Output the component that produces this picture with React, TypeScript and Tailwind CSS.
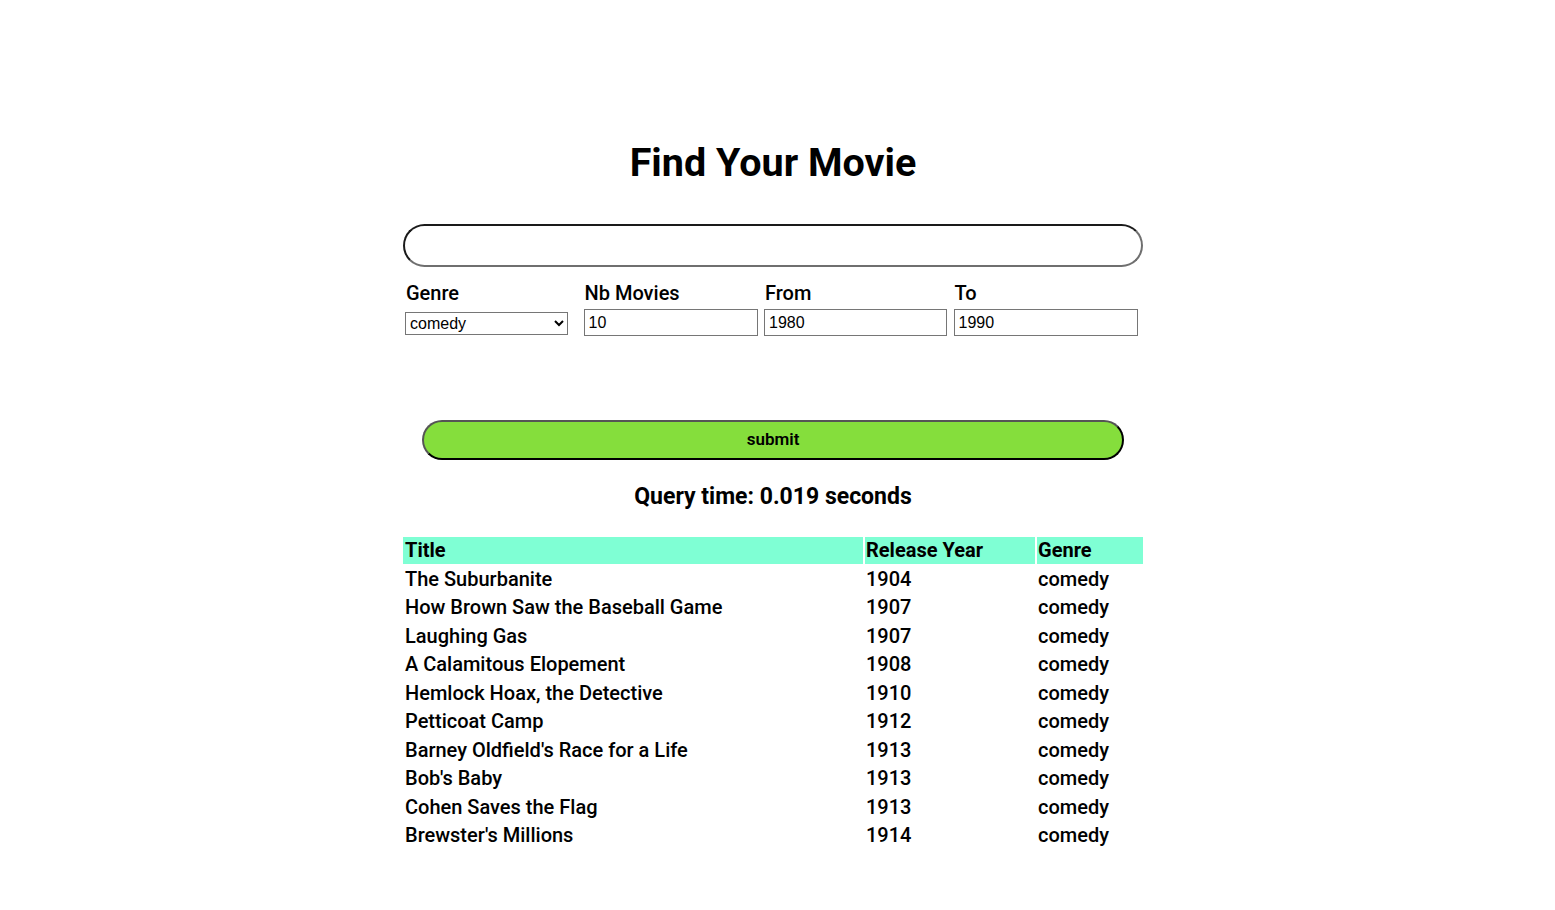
import { useState } from "react"

const movies = [
  { title: "The Suburbanite", year: 1904 },
  { title: "How Brown Saw the Baseball Game", year: 1907 },
  { title: "Laughing Gas", year: 1907 },
  { title: "A Calamitous Elopement", year: 1908 },
  { title: "Hemlock Hoax, the Detective", year: 1910 },
  { title: "Petticoat Camp", year: 1912 },
  { title: "Barney Oldfield's Race for a Life", year: 1913 },
  { title: "Bob's Baby", year: 1913 },
  { title: "Cohen Saves the Flag", year: 1913 },
  { title: "Brewster's Millions", year: 1914 },
]

export default function App() {
  const [query, setQuery] = useState("")
  const [genre, setGenre] = useState("comedy")
  const [nb, setNb] = useState("10")
  const [from, setFrom] = useState("1980")
  const [to, setTo] = useState("1990")

  const inputCls =
    "h-[27px] border border-[#767676] px-[4px] text-[16px] text-black font-['Liberation_Sans',Arial,sans-serif] outline-none"

  return (
    <div className="min-h-[910px] bg-white text-black font-['Roboto',sans-serif]">
      <div className="ml-[403px] w-[740px] pt-[138px]">
        <h1 className="text-center text-[39.5px] font-bold leading-[50px]">Find Your Movie</h1>

        <input
          value={query}
          onChange={(e) => setQuery(e.target.value)}
          className="mt-[36px] block h-[43px] w-full rounded-full border-2 [border-style:inset] border-[#6f6f6f] px-4 outline-none"
        />

        <div className="mt-[14px] flex pl-[1px] text-[20px] font-medium">
          <div className="w-[180px] pl-[1px]">
            <label className="block pl-[1px] leading-[24px]">Genre</label>
            <select
              value={genre}
              onChange={(e) => setGenre(e.target.value)}
              className="mt-[7px] h-[23px] w-[163px] border border-[#767676] bg-white text-[16px] font-['Liberation_Sans',Arial,sans-serif]"
            >
              <option>comedy</option>
              <option>drama</option>
              <option>action</option>
            </select>
          </div>
          <div className="w-[181px]">
            <label className="block pl-[1px] leading-[24px]">Nb Movies</label>
            <input value={nb} onChange={(e) => setNb(e.target.value)} className={inputCls + " mt-[4px] w-[174px]"} />
          </div>
          <div className="w-[190px]">
            <label className="block pl-[1px] leading-[24px]">From</label>
            <input value={from} onChange={(e) => setFrom(e.target.value)} className={inputCls + " mt-[4px] w-[183px]"} />
          </div>
          <div className="w-[190px]">
            <label className="block pl-[1px] leading-[24px]">To</label>
            <input value={to} onChange={(e) => setTo(e.target.value)} className={inputCls + " mt-[4px] w-[184px]"} />
          </div>
        </div>

        <button className="mx-auto mt-[83px] block h-[40px] w-[702px] rounded-full border-2 [border-style:outset] border-[#555] bg-[#85de3c] text-[17px] font-semibold">
          submit
        </button>

        <p className="mt-[22px] text-center text-[23px] font-bold leading-[30px]">Query time: 0.019 seconds</p>

        <table className="-mx-[2px] mt-[23px] w-[744px] border-separate border-spacing-[2px] text-[20px] font-medium leading-[26.5px]">
          <thead>
            <tr className="text-left">
              <th className="w-[460px] bg-[#7fffd4] pl-[2px] font-bold">Title</th>
              <th className="w-[170px] bg-[#7fffd4] pl-[1px] font-bold">Release Year</th>
              <th className="bg-[#7fffd4] pl-[1px] font-bold">Genre</th>
            </tr>
          </thead>
          <tbody>
            {movies.map((m) => (
              <tr key={m.title + m.year}>
                <td className="pl-[2px]">{m.title}</td>
                <td className="pl-[1px]">{m.year}</td>
                <td className="pl-[1px]">comedy</td>
              </tr>
            ))}
          </tbody>
        </table>
      </div>
    </div>
  )
}
